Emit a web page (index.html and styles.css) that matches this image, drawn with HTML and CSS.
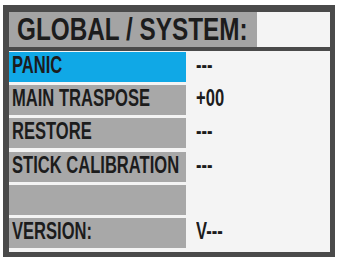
FILE: index.html
```html
<!DOCTYPE html>
<html lang="en">
<head>
  <meta charset="UTF-8" />
  <title>Global / System</title>
  <link rel="stylesheet" href="styles.css">
</head>
<body>
  <div class="panel">
    <header class="panel-header">
      <div class="panel-title"><span class="narrow">GLOBAL / SYSTEM:</span></div>
      <div class="panel-blank"></div>
    </header>

    <div class="menu">
      <div class="menu-row selected">
        <span class="label"><span class="narrow">PANIC</span></span>
        <span class="value"><span class="narrow">---</span></span>
      </div>
      <div class="menu-row">
        <span class="label"><span class="narrow">MAIN TRASPOSE</span></span>
        <span class="value"><span class="narrow">+00</span></span>
      </div>
      <div class="menu-row">
        <span class="label"><span class="narrow">RESTORE</span></span>
        <span class="value"><span class="narrow">---</span></span>
      </div>
      <div class="menu-row">
        <span class="label"><span class="narrow">STICK CALIBRATION</span></span>
        <span class="value"><span class="narrow">---</span></span>
      </div>
      <div class="menu-row">
        <span class="label"></span>
        <span class="value"></span>
      </div>
      <div class="menu-row">
        <span class="label"><span class="narrow">VERSION:</span></span>
        <span class="value"><span class="narrow">V---</span></span>
      </div>
    </div>
  </div>
</body>
</html>
```

FILE: styles.css
```css
:root {
  --frame: #4a4a4a;
  --cell: #a8a8a8;
  --title-bg: #a4a4a4;
  --paper: #f4f4f4;
  --select: #10a8e6;
  --ink: #1c1c1c;
}

* {
  margin: 0;
  padding: 0;
  box-sizing: border-box;
}

body {
  background: #ffffff;
  color: var(--ink);
  font-family: "Liberation Sans", Arial, sans-serif;
  font-weight: 700;
}

/* condensed look: no narrow face is installed */
.narrow {
  display: inline-block;
  transform: scaleX(0.72);
  transform-origin: left center;
}

.panel {
  width: 332px;
  height: 252px;
  margin: 5px 0 0 3px;
  padding: 7px 5px 5px 6px;
  background: var(--frame);
  display: flex;
  flex-direction: column;
}

.panel-header {
  display: grid;
  grid-template-columns: 248px 1fr;
  height: 35px;
  margin-bottom: 4px;
}

.panel-title {
  background: var(--title-bg);
  font-size: 32px;
  line-height: 33px;
  padding: 1px 0 0 8px;
  white-space: nowrap;
}

.panel-title .narrow {
  transform: scaleX(0.76);
}

.panel-blank {
  background: var(--paper);
}

.menu {
  flex: 1;
  background: var(--paper);
  display: grid;
  grid-template-rows: repeat(6, 30px);
  row-gap: 3.2px;
  padding-top: 1px;
}

.menu-row {
  display: grid;
  grid-template-columns: 177px 1fr;
  font-size: 23px;
  line-height: 27px;
  white-space: nowrap;
}

.label {
  background: var(--cell);
  padding-left: 3px;
  overflow: hidden;
}

.menu-row.selected .label {
  background: var(--select);
}

.value {
  padding-left: 10px;
}
```
